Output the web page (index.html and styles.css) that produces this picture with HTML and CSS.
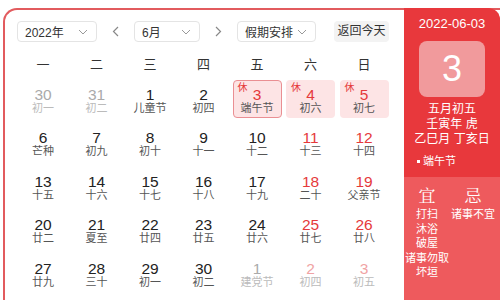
FILE: index.html
```html
<!DOCTYPE html>
<html lang="zh">
<head>
<meta charset="utf-8">
<link rel="stylesheet" href="styles.css">
</head>
<body>
<div class="cal">
  <div class="main">
    <div class="toolbar">
      <div class="select sel-year"><span>2022年</span><svg class="chev" width="10" height="6" viewBox="0 0 10 6"><path d="M1 1 L5 5 L9 1" fill="none" stroke="#999" stroke-width="1"/></svg></div>
      <div class="arrow"><svg width="7" height="11" viewBox="0 0 7 11"><path d="M6 1 L1.5 5.5 L6 10" fill="none" stroke="#888" stroke-width="1.2"/></svg></div>
      <div class="select sel-month"><span>6月</span><svg class="chev" width="10" height="6" viewBox="0 0 10 6"><path d="M1 1 L5 5 L9 1" fill="none" stroke="#999" stroke-width="1"/></svg></div>
      <div class="arrow"><svg width="7" height="11" viewBox="0 0 7 11"><path d="M1 1 L5.5 5.5 L1 10" fill="none" stroke="#888" stroke-width="1.2"/></svg></div>
      <div class="select sel-hol"><span>假期安排</span><svg class="chev" width="10" height="6" viewBox="0 0 10 6"><path d="M1 1 L5 5 L9 1" fill="none" stroke="#999" stroke-width="1"/></svg></div>
      <div class="today-btn">返回今天</div>
    </div>
    <div class="weekdays">
      <span>一</span><span>二</span><span>三</span><span>四</span><span>五</span><span>六</span><span>日</span>
    </div>
    <div class="grid">
      <div class="day other"><b>30</b><i>初一</i></div>
      <div class="day other"><b>31</b><i>初二</i></div>
      <div class="day"><b>1</b><i>儿童节</i></div>
      <div class="day"><b>2</b><i>初四</i></div>
      <div class="day hol sel"><em>休</em><b class="red">3</b><i>端午节</i></div>
      <div class="day hol"><em>休</em><b class="red">4</b><i>初六</i></div>
      <div class="day hol"><em>休</em><b class="red">5</b><i>初七</i></div>

      <div class="day"><b>6</b><i>芒种</i></div>
      <div class="day"><b>7</b><i>初九</i></div>
      <div class="day"><b>8</b><i>初十</i></div>
      <div class="day"><b>9</b><i>十一</i></div>
      <div class="day"><b>10</b><i>十二</i></div>
      <div class="day"><b class="red">11</b><i>十三</i></div>
      <div class="day"><b class="red">12</b><i>十四</i></div>

      <div class="day"><b>13</b><i>十五</i></div>
      <div class="day"><b>14</b><i>十六</i></div>
      <div class="day"><b>15</b><i>十七</i></div>
      <div class="day"><b>16</b><i>十八</i></div>
      <div class="day"><b>17</b><i>十九</i></div>
      <div class="day"><b class="red">18</b><i>二十</i></div>
      <div class="day"><b class="red">19</b><i>父亲节</i></div>

      <div class="day"><b>20</b><i>廿二</i></div>
      <div class="day"><b>21</b><i>夏至</i></div>
      <div class="day"><b>22</b><i>廿四</i></div>
      <div class="day"><b>23</b><i>廿五</i></div>
      <div class="day"><b>24</b><i>廿六</i></div>
      <div class="day"><b class="red">25</b><i>廿七</i></div>
      <div class="day"><b class="red">26</b><i>廿八</i></div>

      <div class="day"><b>27</b><i>廿九</i></div>
      <div class="day"><b>28</b><i>三十</i></div>
      <div class="day"><b>29</b><i>初一</i></div>
      <div class="day"><b>30</b><i>初二</i></div>
      <div class="day other"><b>1</b><i>建党节</i></div>
      <div class="day other"><b class="red">2</b><i>初四</i></div>
      <div class="day other"><b class="red">3</b><i>初五</i></div>
    </div>
  </div>
  <div class="panel">
    <div class="panel-top">
      <div class="p-date">2022-06-03</div>
      <div class="p-box">3</div>
      <div class="p-lunar">
        <div>五月初五</div>
        <div>壬寅年 虎</div>
        <div>乙巳月 丁亥日</div>
      </div>
      <div class="p-fest"><span class="dot"></span>端午节</div>
    </div>
    <div class="panel-bottom">
      <div class="yj">
        <div class="yj-title">宜</div>
        <div>打扫</div>
        <div>沐浴</div>
        <div>破屋</div>
        <div>诸事勿取</div>
        <div>坏垣</div>
      </div>
      <div class="yj">
        <div class="yj-title">忌</div>
        <div>诸事不宜</div>
      </div>
    </div>
  </div>
</div>
</body>
</html>
```

FILE: styles.css
```css
html, body {
  margin: 0;
  padding: 0;
  background: #fff;
  overflow: hidden;
}
body {
  font-family: "Liberation Sans", "Noto Sans CJK SC", sans-serif;
  color: #333;
  width: 500px;
  height: 300px;
}
.cal {
  margin: 8px 0 0 3px;
  width: 495px;
  height: 310px;
  border: 2px solid #e25b5e;
  border-right: 0;
  border-radius: 14px 0 0 0;
  display: flex;
}
.main {
  width: 399px;
  padding-top: 11px;
}
.toolbar {
  display: flex;
  align-items: center;
  height: 21px;
  padding-left: 12px;
}
.select {
  box-sizing: border-box;
  height: 21px;
  border: 1px solid #e4e4e4;
  border-radius: 4px;
  display: flex;
  align-items: center;
  justify-content: space-between;
  padding: 0 8px 0 7px;
  font-size: 12px;
  color: #333;
}
.sel-year { width: 80px; }
.sel-month { width: 66px; }
.sel-hol { width: 79px; }
.arrow {
  width: 37px;
  display: flex;
  justify-content: center;
  align-items: center;
}
.today-btn {
  margin-left: 18px;
  width: 55px;
  height: 21px;
  border-radius: 4px;
  background: #f3f3f3;
  font-size: 12px;
  line-height: 21px;
  text-align: center;
  color: #333;
}
.weekdays {
  display: grid;
  grid-template-columns: repeat(7, 49px);
  column-gap: 4.5px;
  padding-left: 13.5px;
  margin-top: 13px;
  height: 20px;
  line-height: 20px;
  font-size: 13px;
  text-align: center;
  color: #333;
}
.grid {
  display: grid;
  grid-template-columns: repeat(7, 49px);
  grid-auto-rows: 38px;
  column-gap: 4.5px;
  row-gap: 5.4px;
  padding-left: 13.5px;
  margin-top: 5px;
}
.day {
  position: relative;
  box-sizing: border-box;
  border-radius: 4px;
  padding-top: 7px;
  text-align: center;
}
.day b {
  display: block;
  font-weight: normal;
  font-size: 15.5px;
  line-height: 15px;
  color: #222;
}
.day i {
  display: block;
  font-style: normal;
  font-size: 11px;
  line-height: 13px;
  color: #555;
}
.day b.red { color: #e5393b; }
.day.other b { color: #aaa; }
.day.other b.red { color: #f0a3a4; }
.day.other i { color: #bbb; }
.day.hol { background: #fde4e5; }
.day.sel {
  border: 1px solid #ea8f93;
  padding-top: 6px;
}
.day em {
  position: absolute;
  top: 2px;
  left: 5px;
  font-style: normal;
  font-size: 10px;
  line-height: 12px;
  color: #e5393b;
}
.day.sel em { top: 1px; left: 4px; }

.panel {
  width: 96px;
  margin-top: -2px;
  border-radius: 0 12px 0 0;
  background: #ee5a5d;
  color: #fff;
  overflow: hidden;
  display: flex;
  flex-direction: column;
}
.panel-top {
  background: #e8383c;
  padding: 8px 0 9px;
  text-align: center;
}
.p-date {
  font-size: 13px;
  line-height: 16px;
}
.p-box {
  width: 66px;
  height: 56px;
  margin: 9px auto 0;
  border-radius: 8px;
  background: #f19a9c;
  font-size: 36px;
  line-height: 56px;
}
.p-lunar {
  margin-top: 5px;
  font-size: 12px;
  line-height: 15px;
}
.p-fest {
  margin-top: 7px;
  padding-left: 13px;
  text-align: left;
  font-size: 11px;
  line-height: 14px;
  display: flex;
  align-items: center;
}
.dot {
  width: 3px;
  height: 3px;
  background: #fff;
  margin-right: 3px;
}
.panel-bottom {
  flex: 1;
  display: grid;
  grid-template-columns: 46px 46px;
  padding-top: 7px;
  align-content: start;
}
.yj {
  text-align: center;
  font-size: 11px;
  line-height: 14.6px;
  white-space: nowrap;
}
.yj-title {
  font-family: "Noto Serif CJK SC", "Noto Sans CJK SC", serif;
  font-size: 17px;
  line-height: 22px;
  margin-bottom: 1px;
}
```
